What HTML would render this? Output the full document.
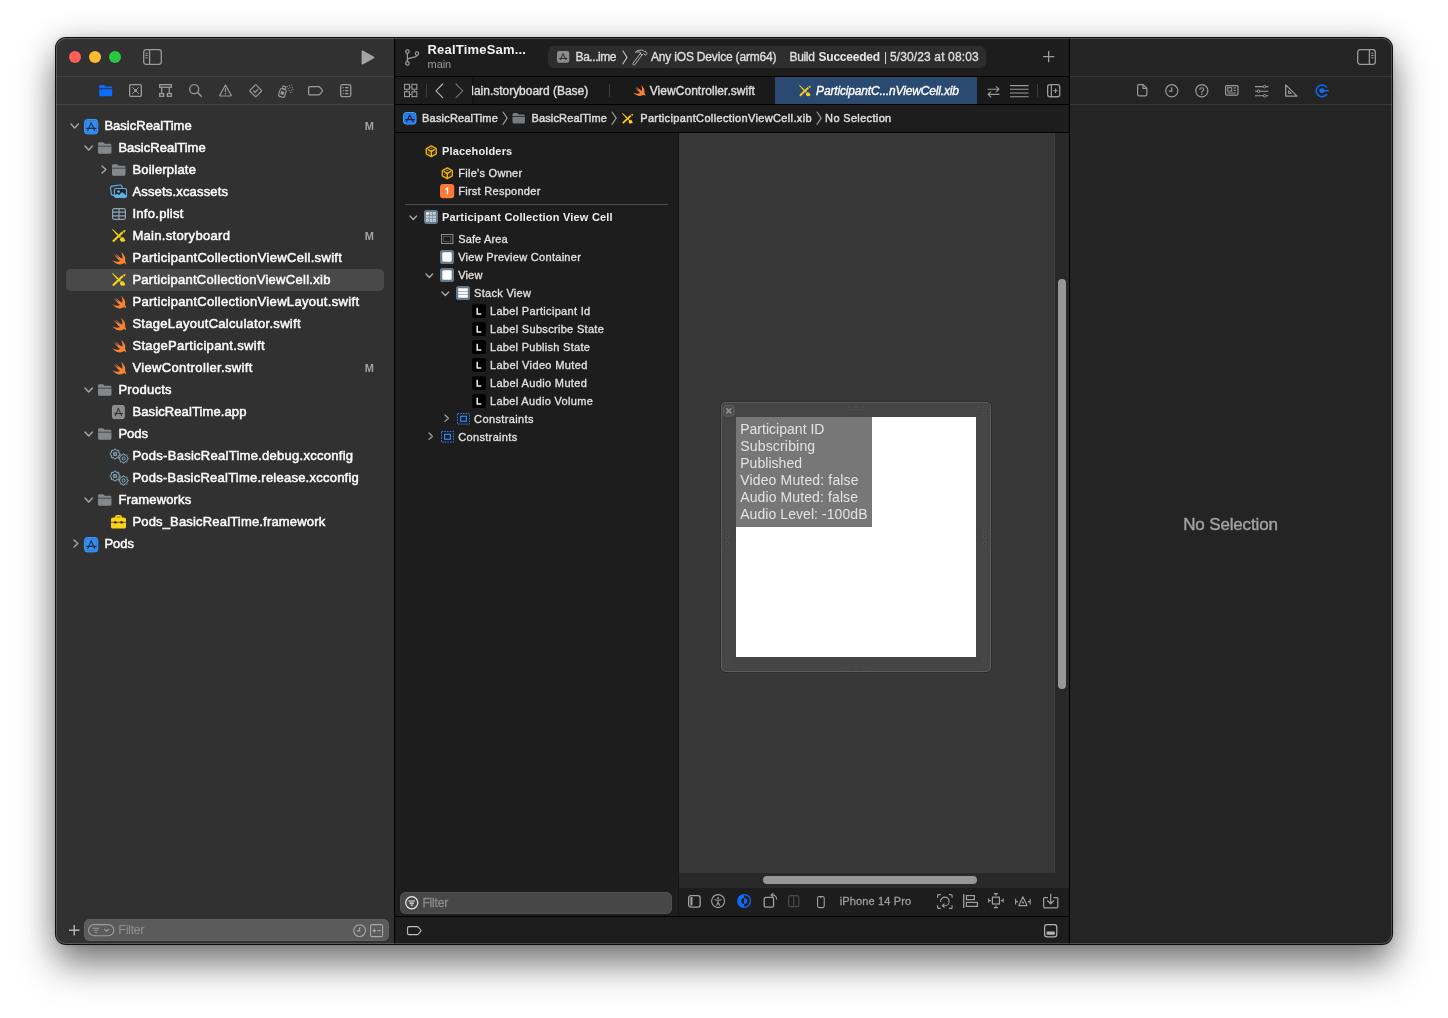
<!DOCTYPE html>
<html><head><meta charset="utf-8"><title>Xcode</title>
<style>
*{box-sizing:border-box;margin:0;padding:0}
html,body{width:1448px;height:1018px;background:#fff;overflow:hidden}
body{font-family:"Liberation Sans",sans-serif;font-size:13px;color:#e6e6e6;position:relative}
.win *{position:absolute}
.win{position:absolute;left:56px;top:38.4px;width:1336px;height:905.2px;border-radius:10px;background:#1e1e1e;overflow:hidden}
.in{will-change:transform;left:-56px;top:-38.4px;width:1448px;height:1018px}
.shadow{position:absolute;left:56px;top:38.4px;width:1336px;height:905.2px;border-radius:10px;
 box-shadow:0 0 0 1px rgba(0,0,0,.92),0 20px 37px rgba(0,0,0,.52),0 0 30px rgba(0,0,0,.14),0 0 5px rgba(0,0,0,.15)}
.t{white-space:nowrap}
svg{overflow:visible}
</style></head><body>
<div class="shadow"></div>
<div class="win"><div class="in">
<!-- nav -->
<div style="left:55px;top:37px;width:339.5px;height:908px;background:#313131;"></div>
<div style="left:68.8px;top:50.8px;width:12.4px;height:12.4px;background:#fe5f57;border-radius:50%;"></div>
<div style="left:88.8px;top:50.8px;width:12.4px;height:12.4px;background:#febc2e;border-radius:50%;"></div>
<div style="left:108.8px;top:50.8px;width:12.4px;height:12.4px;background:#28c840;border-radius:50%;"></div>
<svg style="left:143px;top:49px;" width="19" height="16" viewBox="0 0 19 16" fill="none"><rect x=".7" y=".7" width="17.6" height="14.6" rx="2.5" stroke="#9b9b9b" stroke-width="1.3"/><path d="M6.6 .7V15.3" stroke="#9b9b9b" stroke-width="1.3"/><path d="M2.4 4.2H4.8M2.4 6.5H4.8M2.4 8.8H4.8" stroke="#9b9b9b" stroke-width="1" /></svg>
<svg style="left:361px;top:49.6px;" width="14" height="15" viewBox="0 0 14 15" fill="none"><path d="M.6 1.2C.6 .5 1.2.2 1.8.5L13 6.7C13.6 7 13.6 7.9 13 8.2L1.8 14.5C1.2 14.8.6 14.5.6 13.8Z" fill="#a4a4a4"/></svg>
<div style="left:55px;top:76px;width:339.5px;height:1px;background:#434343;"></div>
<div style="left:55px;top:104px;width:339.5px;height:1px;background:#434343;"></div>
<svg style="left:99px;top:85px;" width="13.4" height="11.2" viewBox="0 0 14 12" fill="none"><path d="M0 1.6C0 .7.7 0 1.6 0H4.6C5.2 0 5.7.25 6.1.7L6.6 1.3C6.9 1.6 7.2 1.7 7.6 1.7H12.4C13.3 1.7 14 2.4 14 3.3V3.6H0Z" fill="#0a6dfd"/><path d="M0 4.5H14V10.4C14 11.3 13.3 12 12.4 12H1.6C.7 12 0 11.3 0 10.4Z" fill="#0a6dfd"/></svg>
<svg style="left:129px;top:84px;" width="13" height="13" viewBox="0 0 13 13" fill="none"><rect x=".65" y=".65" width="11.7" height="11.7" rx="1" stroke="#9b9b9b" stroke-width="1.3"/><path d="M3.2 3.2L9.8 9.8M9.8 3.2L3.2 9.8" stroke="#9b9b9b" stroke-width="1"/><circle cx="6.5" cy="6.5" r="1.5" fill="#9b9b9b"/></svg>
<svg style="left:159px;top:84px;" width="13" height="13" viewBox="0 0 13 13" fill="none"><rect x=".65" y=".65" width="11.7" height="2.6" stroke="#9b9b9b" stroke-width="1.3"/><rect x=".65" y="9.6" width="4" height="2.7" stroke="#9b9b9b" stroke-width="1.3"/><rect x="8.35" y="9.6" width="4" height="2.7" stroke="#9b9b9b" stroke-width="1.3"/><path d="M2.7 3.3V9.6M10.3 3.3V9.6" stroke="#9b9b9b" stroke-width="1.3"/></svg>
<svg style="left:189px;top:84px;" width="13" height="13" viewBox="0 0 13 13" fill="none"><circle cx="5.2" cy="5.2" r="4.5" stroke="#9b9b9b" stroke-width="1.3"/><path d="M8.5 8.5L12.3 12.3" stroke="#9b9b9b" stroke-width="1.5" stroke-linecap="round"/></svg>
<svg style="left:219px;top:83.5px;" width="13" height="12.6" viewBox="0 0 13 12.6" fill="none"><path d="M6.5 1L12.2 11.3C12.4 11.7 12.2 12 11.8 12H1.2C.8 12 .6 11.7.8 11.3Z" stroke="#9b9b9b" stroke-width="1.2" stroke-linejoin="round"/><path d="M6.5 4.8V7.7" stroke="#9b9b9b" stroke-width="1.2" stroke-linecap="round"/><circle cx="6.5" cy="9.8" r=".7" fill="#9b9b9b"/></svg>
<svg style="left:249px;top:84px;" width="13.4" height="13.4" viewBox="0 0 13.4 13.4" fill="none"><rect x="2.3" y="2.3" width="8.8" height="8.8" rx="1.2" transform="rotate(45 6.7 6.7)" stroke="#9b9b9b" stroke-width="1.2"/><path d="M4.6 6.9L6.1 8.4L8.9 5.3" stroke="#9b9b9b" stroke-width="1.2" stroke-linecap="round" stroke-linejoin="round"/></svg>
<svg style="left:278px;top:83.5px;" width="16" height="14" viewBox="0 0 16 14" fill="none"><g transform="rotate(18 5 8)"><rect x="1.6" y="5" width="6.2" height="8.2" rx="1.6" stroke="#9b9b9b" stroke-width="1.1"/><rect x="3.2" y="2.2" width="3" height="2.8" stroke="#9b9b9b" stroke-width="1"/><rect x="3.1" y="7.6" width="3.2" height="3.2" fill="#9b9b9b"/></g><circle cx="9.6" cy="2.6" r=".55" fill="#9b9b9b"/><circle cx="11.6" cy="1.6" r=".55" fill="#9b9b9b"/><circle cx="13.6" cy="0.7" r=".55" fill="#9b9b9b"/><circle cx="10.2" cy="4.6" r=".55" fill="#9b9b9b"/><circle cx="12.2" cy="3.8" r=".55" fill="#9b9b9b"/><circle cx="14.2" cy="3.1" r=".55" fill="#9b9b9b"/><circle cx="11.2" cy="6.6" r=".55" fill="#9b9b9b"/><circle cx="13.2" cy="6" r=".55" fill="#9b9b9b"/><circle cx="15" cy="5.4" r=".55" fill="#9b9b9b"/><circle cx="12.4" cy="8.6" r=".55" fill="#9b9b9b"/><circle cx="14.2" cy="8" r=".55" fill="#9b9b9b"/></svg>
<svg style="left:308px;top:85.6px;" width="15.2" height="9.6" viewBox="0 0 15.2 9.6" fill="none"><path d="M1.9 .65H10.6C11.1 .65 11.5.85 11.8 1.2L14.3 4.2C14.6 4.55 14.6 5.05 14.3 5.4L11.8 8.4C11.5 8.75 11.1 8.95 10.6 8.95H1.9C1.2 8.95.65 8.4.65 7.7V1.9C.65 1.2 1.2.65 1.9.65Z" stroke="#9b9b9b" stroke-width="1.3"/></svg>
<svg style="left:340px;top:84px;" width="11.4" height="13.2" viewBox="0 0 11.4 13.2" fill="none"><rect x=".65" y=".65" width="10.1" height="11.9" rx="1.6" stroke="#9b9b9b" stroke-width="1.3"/><path d="M5 3.6H8.4M5 6.6H8.4M5 9.6H8.4" stroke="#9b9b9b" stroke-width="1.1"/><path d="M2.8 3.6H3.7M2.8 6.6H3.7M2.8 9.6H3.7" stroke="#9b9b9b" stroke-width="1.1"/></svg>
<div style="left:66px;top:269px;width:318px;height:22px;background:#494949;border-radius:5px;"></div>
<svg style="left:71px;top:124.2px;" width="7.4" height="4" viewBox="0 0 7.4 4" fill="none"><path d="M0 0L3.7 4L7.4 0" stroke="#a8a8a8" stroke-width="1.4" stroke-linecap="round" stroke-linejoin="round"/></svg>
<svg style="left:84px;top:118.7px;" width="14.3" height="15.4" viewBox="0 0 14.3 15.4" fill="none"><rect x=".5" y=".5" width="13.3" height="14.4" rx="2.9" fill="#348ef3" stroke="#4198fa"/><rect x="1.55" y="1.55" width="11.2" height="12.3" rx="1.9" fill="none" stroke="#1f6fd2" stroke-width=".55"/><path d="M7.15 3.619L10.6964 11.5808M7.15 3.619L4.7905 9.394M4.3615 10.01L3.8324 11.5808M2.86 9.394H11.869" stroke="#1b2c47" stroke-width="1.15" stroke-linecap="round"/></svg>
<div class="t" style="left:104.4px;top:118.0px;font-size:13px;color:#fbfbfb;line-height:16px;height:16px;-webkit-text-stroke:0.5px #fbfbfb;letter-spacing:0.027px;">BasicRealTime</div>
<div class="t" style="left:364.8px;top:118.0px;font-size:11px;color:#a2a2a2;line-height:16px;height:16px;font-weight:bold;letter-spacing:0.044px;">M</div>
<svg style="left:85px;top:146.2px;" width="7.4" height="4" viewBox="0 0 7.4 4" fill="none"><path d="M0 0L3.7 4L7.4 0" stroke="#a8a8a8" stroke-width="1.4" stroke-linecap="round" stroke-linejoin="round"/></svg>
<svg style="left:98px;top:142px;" width="13.5" height="12" viewBox="0 0 14 12" fill="none"><path d="M0 1.6C0 .7.7 0 1.6 0H4.6C5.2 0 5.7.25 6.1.7L6.6 1.3C6.9 1.6 7.2 1.7 7.6 1.7H12.4C13.3 1.7 14 2.4 14 3.3V3.6H0Z" fill="#85888a"/><path d="M0 4.5H14V10.4C14 11.3 13.3 12 12.4 12H1.6C.7 12 0 11.3 0 10.4Z" fill="#85888a"/></svg>
<div class="t" style="left:118.4px;top:140.0px;font-size:13px;color:#fbfbfb;line-height:16px;height:16px;-webkit-text-stroke:0.5px #fbfbfb;letter-spacing:0.027px;">BasicRealTime</div>
<svg style="left:101.55px;top:165.65px;" width="3.9" height="7.1" viewBox="0 0 3.9 7.1" fill="none"><path d="M0 0L3.9 3.55L0 7.1" stroke="#a8a8a8" stroke-width="1.4" stroke-linecap="round" stroke-linejoin="round"/></svg>
<svg style="left:112px;top:164px;" width="13.5" height="12" viewBox="0 0 14 12" fill="none"><path d="M0 1.6C0 .7.7 0 1.6 0H4.6C5.2 0 5.7.25 6.1.7L6.6 1.3C6.9 1.6 7.2 1.7 7.6 1.7H12.4C13.3 1.7 14 2.4 14 3.3V3.6H0Z" fill="#85888a"/><path d="M0 4.5H14V10.4C14 11.3 13.3 12 12.4 12H1.6C.7 12 0 11.3 0 10.4Z" fill="#85888a"/></svg>
<div class="t" style="left:132.4px;top:162.0px;font-size:13px;color:#fbfbfb;line-height:16px;height:16px;-webkit-text-stroke:0.5px #fbfbfb;letter-spacing:0.204px;">Boilerplate</div>
<svg style="left:109.9px;top:184px;" width="17.1" height="14.1" viewBox="0 0 17.1 14.1" fill="none"><rect x=".9" y="1.5" width="11.6" height="9.4" rx="1.8" transform="rotate(-8 6.7 6.2)" stroke="#5db4e4" stroke-width="1.15"/><rect x="4.5" y="4.5" width="12" height="9" rx="1.8" fill="#262221" stroke="#5db4e4" stroke-width="1.2"/><path d="M4.6 11.6L6.2 10.3C6.8 9.9 7.6 9.9 8.2 10.4L9 11L11 9C11.7 8.4 12.7 8.4 13.4 9L16.4 11.8V12.4C16.4 13.1 15.8 13.6 15.2 13.6H5.8C5.1 13.6 4.6 13.1 4.6 12.4Z" fill="#5db4e4"/><circle cx="8.5" cy="7.6" r="1.4" fill="#5db4e4"/></svg>
<div class="t" style="left:132.4px;top:184.0px;font-size:13px;color:#fbfbfb;line-height:16px;height:16px;-webkit-text-stroke:0.5px #fbfbfb;letter-spacing:0.173px;">Assets.xcassets</div>
<svg style="left:112px;top:208px;" width="14" height="12" viewBox="0 0 14 12" fill="none"><rect x=".6" y=".6" width="12.8" height="10.8" rx="1.8" stroke="#8da3b3" stroke-width="1.2"/><path d="M.6 4.2H13.4M.6 7.8H13.4M7 .6V11.4" stroke="#8da3b3" stroke-width="1.2"/></svg>
<div class="t" style="left:132.4px;top:206.0px;font-size:13px;color:#fbfbfb;line-height:16px;height:16px;-webkit-text-stroke:0.5px #fbfbfb;letter-spacing:0.288px;">Info.plist</div>
<svg style="left:111.9px;top:229.1px;" width="13.4" height="13.4" viewBox="0 0 13.4 13.4" fill="none"><path d="M.1 .55L.7 .1L6.6 5.4L5.4 6.7Z" fill="#fcd116"/><path d="M6.5 6.5L8.5 8.3" stroke="#fcd116" stroke-width="1.8" opacity=".85"/><path d="M8.2 9.6C9 7.8 11.4 7.9 12.2 9.6C12.6 10.5 12.9 11 13.4 11.4C12.6 12.9 9.6 13.6 8.4 11.8C7.9 11 7.9 10.2 8.2 9.6Z" fill="#fcd116"/><path d="M.9 12.4L10.8 3.1" stroke="#fcd116" stroke-width="2.1"/><path d="M11 1.9L13.3 1.3L12.6 3.5Z" fill="#fcd116" stroke="#fcd116" stroke-width=".5" stroke-linejoin="round"/></svg>
<div class="t" style="left:132.4px;top:228.0px;font-size:13px;color:#fbfbfb;line-height:16px;height:16px;-webkit-text-stroke:0.5px #fbfbfb;letter-spacing:0.304px;">Main.storyboard</div>
<div class="t" style="left:364.8px;top:228.0px;font-size:11px;color:#a2a2a2;line-height:16px;height:16px;font-weight:bold;letter-spacing:0.044px;">M</div>
<svg style="left:111.8px;top:251.5px;" width="14.5" height="12.8" viewBox="2.3 3.3 18.4 16.6" fill="none"><defs><linearGradient id="sg" x1="0" y1="0" x2="0" y2="1"><stop offset="0" stop-color="#ff9a3c"/><stop offset="1" stop-color="#f36a2b"/></linearGradient></defs><path d="M13.543 3.41c4.114 2.47 6.545 7.162 5.549 11.131-.024.093-.05.181-.076.272l.002.001c2.062 2.538 1.5 5.258 1.236 4.745-1.072-2.086-3.066-1.568-4.088-1.043a6.803 6.803 0 0 1-.281.158l-.02.012-.002.002c-2.115 1.123-4.957 1.205-7.812-.022a12.568 12.568 0 0 1-5.64-4.838c.649.48 1.35.902 2.097 1.252 3.019 1.414 6.051 1.311 8.197-.002C9.651 12.73 7.101 9.67 5.146 7.191a10.628 10.628 0 0 1-1.005-1.384c2.34 2.142 6.038 4.83 7.365 5.576C8.69 8.408 6.208 4.743 6.324 4.86c4.436 4.47 8.528 6.996 8.528 6.996.154.085.27.154.36.213.085-.215.16-.437.224-.668.708-2.588-.09-5.548-1.893-7.992z" fill="#f98232"/></svg>
<div class="t" style="left:132.4px;top:250.0px;font-size:13px;color:#fbfbfb;line-height:16px;height:16px;-webkit-text-stroke:0.5px #fbfbfb;letter-spacing:0.325px;">ParticipantCollectionViewCell.swift</div>
<svg style="left:111.9px;top:273.1px;" width="13.4" height="13.4" viewBox="0 0 13.4 13.4" fill="none"><path d="M.1 .55L.7 .1L6.6 5.4L5.4 6.7Z" fill="#fcd116"/><path d="M6.5 6.5L8.5 8.3" stroke="#fcd116" stroke-width="1.8" opacity=".85"/><path d="M8.2 9.6C9 7.8 11.4 7.9 12.2 9.6C12.6 10.5 12.9 11 13.4 11.4C12.6 12.9 9.6 13.6 8.4 11.8C7.9 11 7.9 10.2 8.2 9.6Z" fill="#fcd116"/><path d="M.9 12.4L10.8 3.1" stroke="#fcd116" stroke-width="2.1"/><path d="M11 1.9L13.3 1.3L12.6 3.5Z" fill="#fcd116" stroke="#fcd116" stroke-width=".5" stroke-linejoin="round"/></svg>
<div class="t" style="left:132.4px;top:272.0px;font-size:13px;color:#fbfbfb;line-height:16px;height:16px;-webkit-text-stroke:0.5px #fbfbfb;letter-spacing:0.278px;">ParticipantCollectionViewCell.xib</div>
<svg style="left:111.8px;top:295.5px;" width="14.5" height="12.8" viewBox="2.3 3.3 18.4 16.6" fill="none"><defs><linearGradient id="sg" x1="0" y1="0" x2="0" y2="1"><stop offset="0" stop-color="#ff9a3c"/><stop offset="1" stop-color="#f36a2b"/></linearGradient></defs><path d="M13.543 3.41c4.114 2.47 6.545 7.162 5.549 11.131-.024.093-.05.181-.076.272l.002.001c2.062 2.538 1.5 5.258 1.236 4.745-1.072-2.086-3.066-1.568-4.088-1.043a6.803 6.803 0 0 1-.281.158l-.02.012-.002.002c-2.115 1.123-4.957 1.205-7.812-.022a12.568 12.568 0 0 1-5.64-4.838c.649.48 1.35.902 2.097 1.252 3.019 1.414 6.051 1.311 8.197-.002C9.651 12.73 7.101 9.67 5.146 7.191a10.628 10.628 0 0 1-1.005-1.384c2.34 2.142 6.038 4.83 7.365 5.576C8.69 8.408 6.208 4.743 6.324 4.86c4.436 4.47 8.528 6.996 8.528 6.996.154.085.27.154.36.213.085-.215.16-.437.224-.668.708-2.588-.09-5.548-1.893-7.992z" fill="#f98232"/></svg>
<div class="t" style="left:132.4px;top:294.0px;font-size:13px;color:#fbfbfb;line-height:16px;height:16px;-webkit-text-stroke:0.5px #fbfbfb;letter-spacing:0.320px;">ParticipantCollectionViewLayout.swift</div>
<svg style="left:111.8px;top:317.5px;" width="14.5" height="12.8" viewBox="2.3 3.3 18.4 16.6" fill="none"><defs><linearGradient id="sg" x1="0" y1="0" x2="0" y2="1"><stop offset="0" stop-color="#ff9a3c"/><stop offset="1" stop-color="#f36a2b"/></linearGradient></defs><path d="M13.543 3.41c4.114 2.47 6.545 7.162 5.549 11.131-.024.093-.05.181-.076.272l.002.001c2.062 2.538 1.5 5.258 1.236 4.745-1.072-2.086-3.066-1.568-4.088-1.043a6.803 6.803 0 0 1-.281.158l-.02.012-.002.002c-2.115 1.123-4.957 1.205-7.812-.022a12.568 12.568 0 0 1-5.64-4.838c.649.48 1.35.902 2.097 1.252 3.019 1.414 6.051 1.311 8.197-.002C9.651 12.73 7.101 9.67 5.146 7.191a10.628 10.628 0 0 1-1.005-1.384c2.34 2.142 6.038 4.83 7.365 5.576C8.69 8.408 6.208 4.743 6.324 4.86c4.436 4.47 8.528 6.996 8.528 6.996.154.085.27.154.36.213.085-.215.16-.437.224-.668.708-2.588-.09-5.548-1.893-7.992z" fill="#f98232"/></svg>
<div class="t" style="left:132.4px;top:316.0px;font-size:13px;color:#fbfbfb;line-height:16px;height:16px;-webkit-text-stroke:0.5px #fbfbfb;letter-spacing:0.297px;">StageLayoutCalculator.swift</div>
<svg style="left:111.8px;top:339.5px;" width="14.5" height="12.8" viewBox="2.3 3.3 18.4 16.6" fill="none"><defs><linearGradient id="sg" x1="0" y1="0" x2="0" y2="1"><stop offset="0" stop-color="#ff9a3c"/><stop offset="1" stop-color="#f36a2b"/></linearGradient></defs><path d="M13.543 3.41c4.114 2.47 6.545 7.162 5.549 11.131-.024.093-.05.181-.076.272l.002.001c2.062 2.538 1.5 5.258 1.236 4.745-1.072-2.086-3.066-1.568-4.088-1.043a6.803 6.803 0 0 1-.281.158l-.02.012-.002.002c-2.115 1.123-4.957 1.205-7.812-.022a12.568 12.568 0 0 1-5.64-4.838c.649.48 1.35.902 2.097 1.252 3.019 1.414 6.051 1.311 8.197-.002C9.651 12.73 7.101 9.67 5.146 7.191a10.628 10.628 0 0 1-1.005-1.384c2.34 2.142 6.038 4.83 7.365 5.576C8.69 8.408 6.208 4.743 6.324 4.86c4.436 4.47 8.528 6.996 8.528 6.996.154.085.27.154.36.213.085-.215.16-.437.224-.668.708-2.588-.09-5.548-1.893-7.992z" fill="#f98232"/></svg>
<div class="t" style="left:132.4px;top:338.0px;font-size:13px;color:#fbfbfb;line-height:16px;height:16px;-webkit-text-stroke:0.5px #fbfbfb;letter-spacing:0.344px;">StageParticipant.swift</div>
<svg style="left:111.8px;top:361.5px;" width="14.5" height="12.8" viewBox="2.3 3.3 18.4 16.6" fill="none"><defs><linearGradient id="sg" x1="0" y1="0" x2="0" y2="1"><stop offset="0" stop-color="#ff9a3c"/><stop offset="1" stop-color="#f36a2b"/></linearGradient></defs><path d="M13.543 3.41c4.114 2.47 6.545 7.162 5.549 11.131-.024.093-.05.181-.076.272l.002.001c2.062 2.538 1.5 5.258 1.236 4.745-1.072-2.086-3.066-1.568-4.088-1.043a6.803 6.803 0 0 1-.281.158l-.02.012-.002.002c-2.115 1.123-4.957 1.205-7.812-.022a12.568 12.568 0 0 1-5.64-4.838c.649.48 1.35.902 2.097 1.252 3.019 1.414 6.051 1.311 8.197-.002C9.651 12.73 7.101 9.67 5.146 7.191a10.628 10.628 0 0 1-1.005-1.384c2.34 2.142 6.038 4.83 7.365 5.576C8.69 8.408 6.208 4.743 6.324 4.86c4.436 4.47 8.528 6.996 8.528 6.996.154.085.27.154.36.213.085-.215.16-.437.224-.668.708-2.588-.09-5.548-1.893-7.992z" fill="#f98232"/></svg>
<div class="t" style="left:132.4px;top:360.0px;font-size:13px;color:#fbfbfb;line-height:16px;height:16px;-webkit-text-stroke:0.5px #fbfbfb;letter-spacing:0.354px;">ViewController.swift</div>
<div class="t" style="left:364.8px;top:360.0px;font-size:11px;color:#a2a2a2;line-height:16px;height:16px;font-weight:bold;letter-spacing:0.044px;">M</div>
<svg style="left:85px;top:388.2px;" width="7.4" height="4" viewBox="0 0 7.4 4" fill="none"><path d="M0 0L3.7 4L7.4 0" stroke="#a8a8a8" stroke-width="1.4" stroke-linecap="round" stroke-linejoin="round"/></svg>
<svg style="left:98px;top:384px;" width="13.5" height="12" viewBox="0 0 14 12" fill="none"><path d="M0 1.6C0 .7.7 0 1.6 0H4.6C5.2 0 5.7.25 6.1.7L6.6 1.3C6.9 1.6 7.2 1.7 7.6 1.7H12.4C13.3 1.7 14 2.4 14 3.3V3.6H0Z" fill="#85888a"/><path d="M0 4.5H14V10.4C14 11.3 13.3 12 12.4 12H1.6C.7 12 0 11.3 0 10.4Z" fill="#85888a"/></svg>
<div class="t" style="left:118.4px;top:382.0px;font-size:13px;color:#fbfbfb;line-height:16px;height:16px;-webkit-text-stroke:0.5px #fbfbfb;letter-spacing:0.273px;">Products</div>
<svg style="left:112px;top:405px;" width="12.7" height="14.1" viewBox="0 0 12.7 14.1" fill="none"><rect width="12.7" height="14.1" rx="2.8" fill="#8c8c8c"/><rect x=".4" y=".4" width="11.9" height="13.3" rx="2.4" stroke="#999" stroke-width=".6"/><path d="M6.35 3.3135L9.4996 10.6032M6.35 3.3135L4.2545 8.601M3.8735 9.165L3.4036 10.6032M2.54 8.601H10.541" stroke="#262626" stroke-width="0.95" stroke-linecap="round"/></svg>
<div class="t" style="left:132.4px;top:404.0px;font-size:13px;color:#fbfbfb;line-height:16px;height:16px;-webkit-text-stroke:0.5px #fbfbfb;letter-spacing:0.114px;">BasicRealTime.app</div>
<svg style="left:85px;top:432.2px;" width="7.4" height="4" viewBox="0 0 7.4 4" fill="none"><path d="M0 0L3.7 4L7.4 0" stroke="#a8a8a8" stroke-width="1.4" stroke-linecap="round" stroke-linejoin="round"/></svg>
<svg style="left:98px;top:428px;" width="13.5" height="12" viewBox="0 0 14 12" fill="none"><path d="M0 1.6C0 .7.7 0 1.6 0H4.6C5.2 0 5.7.25 6.1.7L6.6 1.3C6.9 1.6 7.2 1.7 7.6 1.7H12.4C13.3 1.7 14 2.4 14 3.3V3.6H0Z" fill="#85888a"/><path d="M0 4.5H14V10.4C14 11.3 13.3 12 12.4 12H1.6C.7 12 0 11.3 0 10.4Z" fill="#85888a"/></svg>
<div class="t" style="left:118.4px;top:426.0px;font-size:13px;color:#fbfbfb;line-height:16px;height:16px;-webkit-text-stroke:0.5px #fbfbfb;letter-spacing:-0.035px;">Pods</div>
<svg style="left:109.8px;top:449px;" width="18.2" height="14.2" viewBox="0 0 18.2 14.2" fill="none"><path d="M10.06 4.45L10.06 5.65L8.95 6.13L8.59 7.01L9.03 8.14L8.19 8.98L7.06 8.54L6.18 8.90L5.70 10.01L4.50 10.01L4.02 8.90L3.14 8.54L2.01 8.98L1.17 8.14L1.61 7.01L1.25 6.13L0.14 5.65L0.14 4.45L1.25 3.97L1.61 3.09L1.17 1.96L2.01 1.12L3.14 1.56L4.02 1.20L4.50 0.09L5.70 0.09L6.18 1.20L7.06 1.56L8.19 1.12L9.03 1.96L8.59 3.09L8.95 3.97Z" stroke="#8fb0c6" stroke-width="1" stroke-linejoin="round"/><circle cx="5.1" cy="5.05" r="1.65" stroke="#8fb0c6" stroke-width="1"/><path d="M2.6 2.55L7.6 7.55M7.6 2.55L2.6 7.55" stroke="#8fb0c6" stroke-width=".6" opacity=".6"/><path d="M18.17 8.95L18.17 10.05L17.14 10.49L16.81 11.31L17.22 12.34L16.44 13.12L15.41 12.71L14.59 13.04L14.15 14.07L13.05 14.07L12.61 13.04L11.79 12.71L10.76 13.12L9.98 12.34L10.39 11.31L10.06 10.49L9.03 10.05L9.03 8.95L10.06 8.51L10.39 7.69L9.98 6.66L10.76 5.88L11.79 6.29L12.61 5.96L13.05 4.93L14.15 4.93L14.59 5.96L15.41 6.29L16.44 5.88L17.22 6.66L16.81 7.69L17.14 8.51Z" stroke="#8fb0c6" stroke-width="1" stroke-linejoin="round"/><circle cx="13.6" cy="9.5" r="1.518" stroke="#8fb0c6" stroke-width="1"/></svg>
<div class="t" style="left:132.4px;top:448.0px;font-size:13px;color:#fbfbfb;line-height:16px;height:16px;-webkit-text-stroke:0.5px #fbfbfb;letter-spacing:0.272px;">Pods-BasicRealTime.debug.xcconfig</div>
<svg style="left:109.8px;top:471px;" width="18.2" height="14.2" viewBox="0 0 18.2 14.2" fill="none"><path d="M10.06 4.45L10.06 5.65L8.95 6.13L8.59 7.01L9.03 8.14L8.19 8.98L7.06 8.54L6.18 8.90L5.70 10.01L4.50 10.01L4.02 8.90L3.14 8.54L2.01 8.98L1.17 8.14L1.61 7.01L1.25 6.13L0.14 5.65L0.14 4.45L1.25 3.97L1.61 3.09L1.17 1.96L2.01 1.12L3.14 1.56L4.02 1.20L4.50 0.09L5.70 0.09L6.18 1.20L7.06 1.56L8.19 1.12L9.03 1.96L8.59 3.09L8.95 3.97Z" stroke="#8fb0c6" stroke-width="1" stroke-linejoin="round"/><circle cx="5.1" cy="5.05" r="1.65" stroke="#8fb0c6" stroke-width="1"/><path d="M2.6 2.55L7.6 7.55M7.6 2.55L2.6 7.55" stroke="#8fb0c6" stroke-width=".6" opacity=".6"/><path d="M18.17 8.95L18.17 10.05L17.14 10.49L16.81 11.31L17.22 12.34L16.44 13.12L15.41 12.71L14.59 13.04L14.15 14.07L13.05 14.07L12.61 13.04L11.79 12.71L10.76 13.12L9.98 12.34L10.39 11.31L10.06 10.49L9.03 10.05L9.03 8.95L10.06 8.51L10.39 7.69L9.98 6.66L10.76 5.88L11.79 6.29L12.61 5.96L13.05 4.93L14.15 4.93L14.59 5.96L15.41 6.29L16.44 5.88L17.22 6.66L16.81 7.69L17.14 8.51Z" stroke="#8fb0c6" stroke-width="1" stroke-linejoin="round"/><circle cx="13.6" cy="9.5" r="1.518" stroke="#8fb0c6" stroke-width="1"/></svg>
<div class="t" style="left:132.4px;top:470.0px;font-size:13px;color:#fbfbfb;line-height:16px;height:16px;-webkit-text-stroke:0.5px #fbfbfb;letter-spacing:0.234px;">Pods-BasicRealTime.release.xcconfig</div>
<svg style="left:85px;top:498.2px;" width="7.4" height="4" viewBox="0 0 7.4 4" fill="none"><path d="M0 0L3.7 4L7.4 0" stroke="#a8a8a8" stroke-width="1.4" stroke-linecap="round" stroke-linejoin="round"/></svg>
<svg style="left:98px;top:494px;" width="13.5" height="12" viewBox="0 0 14 12" fill="none"><path d="M0 1.6C0 .7.7 0 1.6 0H4.6C5.2 0 5.7.25 6.1.7L6.6 1.3C6.9 1.6 7.2 1.7 7.6 1.7H12.4C13.3 1.7 14 2.4 14 3.3V3.6H0Z" fill="#85888a"/><path d="M0 4.5H14V10.4C14 11.3 13.3 12 12.4 12H1.6C.7 12 0 11.3 0 10.4Z" fill="#85888a"/></svg>
<div class="t" style="left:118.4px;top:492.0px;font-size:13px;color:#fbfbfb;line-height:16px;height:16px;-webkit-text-stroke:0.5px #fbfbfb;letter-spacing:0.148px;">Frameworks</div>
<svg style="left:110.8px;top:514.75px;" width="15" height="13.6" viewBox="0 0 15 13.6" fill="none"><path d="M4.2 3V1.8C4.2 .8 5 0 6 0H9C10 0 10.8 .8 10.8 1.8V3Z" fill="#fdd317"/><rect x="5.6" y="1.4" width="3.8" height="1.5" rx=".4" fill="#8c7a1c"/><path d="M0 7V4.6C0 3.5 .9 2.6 2 2.6H13C14.1 2.6 15 3.5 15 4.6V7Z" fill="#fdd317"/><rect x="0" y="6.8" width="15" height="1.4" fill="#8a7618"/><path d="M0 8H15V11.8C15 12.8 14.2 13.6 13.2 13.6H1.8C.8 13.6 0 12.8 0 11.8Z" fill="#fdd317"/><ellipse cx="4.4" cy="7.4" rx="1.5" ry="1.15" fill="#20212c"/><ellipse cx="10.6" cy="7.4" rx="1.5" ry="1.15" fill="#20212c"/></svg>
<div class="t" style="left:132.4px;top:514.0px;font-size:13px;color:#fbfbfb;line-height:16px;height:16px;-webkit-text-stroke:0.5px #fbfbfb;letter-spacing:0.174px;">Pods_BasicRealTime.framework</div>
<svg style="left:73.55px;top:539.65px;" width="3.9" height="7.1" viewBox="0 0 3.9 7.1" fill="none"><path d="M0 0L3.9 3.55L0 7.1" stroke="#a8a8a8" stroke-width="1.4" stroke-linecap="round" stroke-linejoin="round"/></svg>
<svg style="left:84px;top:536.7px;" width="14.3" height="15.4" viewBox="0 0 14.3 15.4" fill="none"><rect x=".5" y=".5" width="13.3" height="14.4" rx="2.9" fill="#348ef3" stroke="#4198fa"/><rect x="1.55" y="1.55" width="11.2" height="12.3" rx="1.9" fill="none" stroke="#1f6fd2" stroke-width=".55"/><path d="M7.15 3.619L10.6964 11.5808M7.15 3.619L4.7905 9.394M4.3615 10.01L3.8324 11.5808M2.86 9.394H11.869" stroke="#1b2c47" stroke-width="1.15" stroke-linecap="round"/></svg>
<div class="t" style="left:104.4px;top:536.0px;font-size:13px;color:#fbfbfb;line-height:16px;height:16px;-webkit-text-stroke:0.5px #fbfbfb;letter-spacing:-0.035px;">Pods</div>
<svg style="left:68.5px;top:925px;" width="10.5" height="10.5" viewBox="0 0 10.5 10.5" fill="none"><path d="M5.25 0V10.5M0 5.25H10.5" stroke="#b4b4b4" stroke-width="1.4"/></svg>
<div style="left:84px;top:919.3px;width:305px;height:21.6px;background:#5b5b5b;border-radius:6px;box-shadow:inset 0 0 0 .5px #6a6a6a;"></div>
<svg style="left:88px;top:924.3px;" width="26.4" height="12.4" viewBox="0 0 26.4 12.4" fill="none"><rect x=".6" y=".6" width="25.2" height="11.2" rx="5.6" stroke="#9c9c9c" stroke-width="1.1"/><path d="M4.6 4.2H11.4M5.8 6.3H10.2M7 8.4H9" stroke="#9c9c9c" stroke-width="1"/><path d="M16.6 5.3L18.6 7.2L20.6 5.3" stroke="#9c9c9c" stroke-width="1.2" stroke-linecap="round" stroke-linejoin="round"/></svg>
<div class="t" style="left:118.2px;top:922.4px;font-size:13px;color:#8f8f8f;line-height:16px;height:16px;letter-spacing:-0.482px;">Filter</div>
<svg style="left:352.8px;top:923.6px;" width="13.2" height="13.2" viewBox="0 0 13.2 13.2" fill="none"><circle cx="6.6" cy="6.6" r="5.9" stroke="#a8a8a8" stroke-width="1.1"/><path d="M6.6 3.2V6.9H3.8" stroke="#a8a8a8" stroke-width="1.1"/></svg>
<svg style="left:369.6px;top:923.6px;" width="13.2" height="13.2" viewBox="0 0 13.2 13.2" fill="none"><rect x=".6" y=".6" width="12" height="12" rx="1.4" stroke="#a8a8a8" stroke-width="1.1"/><path d="M2.6 6.6H6.2M4.4 4.8V8.4M7.6 6.6H10.6" stroke="#a8a8a8" stroke-width="1.1"/></svg>
<!-- editor -->
<div style="left:394px;top:37px;width:1.2px;height:908px;background:#000;"></div>
<div style="left:395.2px;top:37px;width:674px;height:39px;background:#1d1d1d;"></div>
<div style="left:395.2px;top:76px;width:674px;height:1px;background:#000;"></div>
<svg style="left:404.5px;top:49px;" width="14.5" height="17" viewBox="0 0 14.5 17" fill="none"><circle cx="2.4" cy="2.6" r="1.7" stroke="#9b9b9b" stroke-width="1.2"/><circle cx="12" cy="4.6" r="1.7" stroke="#9b9b9b" stroke-width="1.2"/><circle cx="2.4" cy="14.4" r="1.7" stroke="#9b9b9b" stroke-width="1.2"/><path d="M2.4 4.3V12.7M12 6.3C12 9.4 2.4 8 2.4 11" stroke="#9b9b9b" stroke-width="1.3"/></svg>
<div class="t" style="left:427.5px;top:42.0px;font-size:13px;color:#f2f2f2;line-height:16px;height:16px;font-weight:bold;letter-spacing:0.195px;">RealTimeSam...</div>
<div class="t" style="left:427.5px;top:56.2px;font-size:11px;color:#9a9a9a;line-height:16px;height:16px;letter-spacing:-0.036px;">main</div>
<div style="left:548px;top:46px;width:438px;height:22px;background:#2d2d2d;border-radius:6px;"></div>
<svg style="left:557px;top:51.2px;" width="12.3" height="11.8" viewBox="0 0 12.3 11.8" fill="none"><rect width="12.3" height="11.8" rx="2.2" fill="#8c8c8c"/><path d="M6.1 2.9L8.9 8.8M6.1 2.9L4 7.4M3.7 7.9L3.3 8.8M2.5 7.5H9.9" stroke="#2a2a2a" stroke-width=".95" stroke-linecap="round"/></svg>
<div class="t" style="left:575.6px;top:49.2px;font-size:12px;color:#dedede;line-height:16px;height:16px;-webkit-text-stroke:0.35px #dedede;letter-spacing:-0.450px;">Ba...ime</div>
<svg style="left:622.5px;top:50.7px;" width="4" height="12.8" viewBox="0 0 4 12.8" fill="none"><path d="M0 0L4 6.4L0 12.8" stroke="#c4c4c4" stroke-width="1.1" stroke-linecap="round" stroke-linejoin="round"/></svg>
<svg style="left:632px;top:49px;" width="15.1" height="16.2" viewBox="0 0 15.1 16.2" fill="none"><path d="M8.2 4.6L10 6L2.9 15.6C2.5 16.1 1.8 16.2 1.3 15.8C.8 15.4 .7 14.7 1.1 14.2Z" stroke="#b2b2b2" stroke-width="1" stroke-linejoin="round"/><path d="M3.4 3.2C5.2 1.2 8.4 .5 11.4 1.6L12.4 2.6L13.2 2.1L15 4.4L13.4 6.4L11.6 4.6L10 6L8.2 4.6L8.8 3.6C7 2.6 5 2.8 3.4 3.2Z" stroke="#b2b2b2" stroke-width="1" stroke-linejoin="round"/></svg>
<div class="t" style="left:651.0px;top:49.2px;font-size:12px;color:#dedede;line-height:16px;height:16px;-webkit-text-stroke:0.35px #dedede;letter-spacing:-0.185px;">Any iOS Device (arm64)</div>
<div class="t" style="left:789.6px;top:49.2px;font-size:12px;color:#dedede;line-height:16px;height:16px;-webkit-text-stroke:0.35px #dedede;letter-spacing:-0.358px;">Build</div>
<div class="t" style="left:818.6px;top:49.2px;font-size:12px;color:#e8e8e8;line-height:16px;height:16px;font-weight:bold;letter-spacing:-0.249px;">Succeeded</div>
<div class="t" style="left:884.0px;top:49.2px;font-size:12px;color:#dedede;line-height:16px;height:16px;">|</div>
<div class="t" style="left:889.9px;top:49.2px;font-size:12px;color:#dedede;line-height:16px;height:16px;-webkit-text-stroke:0.35px #dedede;letter-spacing:0.138px;">5/30/23 at 08:03</div>
<svg style="left:1043.4px;top:51.4px;" width="11.3" height="11.3" viewBox="0 0 11.3 11.3" fill="none"><path d="M5.65 0V11.3M0 5.65H11.3" stroke="#9b9b9b" stroke-width="1.3"/></svg>
<div style="left:395.2px;top:77px;width:674px;height:27px;background:#1d1d1d;"></div>
<div style="left:472.2px;top:77px;width:597px;height:27px;background:#1a1a1a;"></div>
<div style="left:472.2px;top:77px;width:3px;height:27px;background:linear-gradient(90deg,#111,#1a1a1a);"></div>
<div style="left:395.2px;top:104px;width:674px;height:1px;background:#000;"></div>
<svg style="left:403.9px;top:84px;" width="13.2" height="13.2" viewBox="0 0 13.2 13.2" fill="none"><rect x="0.55" y="0.35" width="4.9" height="4.9" stroke="#9b9b9b" stroke-width="1.1"/><rect x="7.95" y="0.35" width="4.9" height="4.9" stroke="#9b9b9b" stroke-width="1.1"/><rect x="0.55" y="7.75" width="4.9" height="4.9" stroke="#9b9b9b" stroke-width="1.1"/><rect x="7.95" y="7.75" width="4.9" height="4.9" stroke="#9b9b9b" stroke-width="1.1"/><path d="M6 3H7.4M3 6V7.4M10.4 6V7.4M6 10.4H7.4" stroke="#9b9b9b" stroke-width="1"/></svg>
<div style="left:426px;top:84px;width:1px;height:12.5px;background:#3c3c3c;"></div>
<svg style="left:435.65px;top:83.8px;" width="6.7" height="13.6" viewBox="0 0 6.7 13.6" fill="none"><path d="M6.7 0L0 6.8L6.7 13.6" stroke="#b4b4b4" stroke-width="1.2" stroke-linecap="round" stroke-linejoin="round"/></svg>
<svg style="left:455.65px;top:83.8px;" width="6.7" height="13.6" viewBox="0 0 6.7 13.6" fill="none"><path d="M0 0L6.7 6.8L0 13.6" stroke="#6e6e6e" stroke-width="1.2" stroke-linecap="round" stroke-linejoin="round"/></svg>
<div style="left:472.2px;top:77px;width:130px;height:27px;overflow:hidden"><div class="t" style="left:-8.2px;top:6.2px;font-size:12px;color:#dcdcdc;line-height:16px;height:16px;-webkit-text-stroke:0.4px #dcdcdc;letter-spacing:-0.023px;">Main.storyboard (Base)</div></div>
<div style="left:608.6px;top:84px;width:1px;height:13px;background:#3c3c3c;"></div>
<svg style="left:632.6px;top:85.2px;" width="12.6" height="11.2" viewBox="2.3 3.3 18.4 16.6" fill="none"><defs><linearGradient id="sg" x1="0" y1="0" x2="0" y2="1"><stop offset="0" stop-color="#ff9a3c"/><stop offset="1" stop-color="#f36a2b"/></linearGradient></defs><path d="M13.543 3.41c4.114 2.47 6.545 7.162 5.549 11.131-.024.093-.05.181-.076.272l.002.001c2.062 2.538 1.5 5.258 1.236 4.745-1.072-2.086-3.066-1.568-4.088-1.043a6.803 6.803 0 0 1-.281.158l-.02.012-.002.002c-2.115 1.123-4.957 1.205-7.812-.022a12.568 12.568 0 0 1-5.64-4.838c.649.48 1.35.902 2.097 1.252 3.019 1.414 6.051 1.311 8.197-.002C9.651 12.73 7.101 9.67 5.146 7.191a10.628 10.628 0 0 1-1.005-1.384c2.34 2.142 6.038 4.83 7.365 5.576C8.69 8.408 6.208 4.743 6.324 4.86c4.436 4.47 8.528 6.996 8.528 6.996.154.085.27.154.36.213.085-.215.16-.437.224-.668.708-2.588-.09-5.548-1.893-7.992z" fill="#f98232"/></svg>
<div class="t" style="left:649.8px;top:83.2px;font-size:12px;color:#dcdcdc;line-height:16px;height:16px;-webkit-text-stroke:0.4px #dcdcdc;letter-spacing:0.035px;">ViewController.swift</div>
<div style="left:775px;top:77px;width:202.4px;height:27px;background:#2b4a72;"></div>
<svg style="left:799.2px;top:85.3px;" width="11.6" height="11.6" viewBox="0 0 13.4 13.4" fill="none"><path d="M.1 .55L.7 .1L6.6 5.4L5.4 6.7Z" fill="#fcd116"/><path d="M6.5 6.5L8.5 8.3" stroke="#fcd116" stroke-width="1.8" opacity=".85"/><path d="M8.2 9.6C9 7.8 11.4 7.9 12.2 9.6C12.6 10.5 12.9 11 13.4 11.4C12.6 12.9 9.6 13.6 8.4 11.8C7.9 11 7.9 10.2 8.2 9.6Z" fill="#fcd116"/><path d="M.9 12.4L10.8 3.1" stroke="#fcd116" stroke-width="2.1"/><path d="M11 1.9L13.3 1.3L12.6 3.5Z" fill="#fcd116" stroke="#fcd116" stroke-width=".5" stroke-linejoin="round"/></svg>
<div class="t" style="left:816.1px;top:83.2px;font-size:12px;color:#ffffff;line-height:16px;height:16px;font-style:italic;-webkit-text-stroke:0.35px #ffffff;letter-spacing:-0.160px;">ParticipantC...nViewCell.xib</div>
<svg style="left:987px;top:85.6px;" width="13" height="11.6" viewBox="0 0 13 11.6" fill="none"><path d="M1 3.2H12M9.2 .6L12 3.2L9.2 5.8M12 8.4H1M3.8 5.8L1 8.4L3.8 11" stroke="#9b9b9b" stroke-width="1.1" stroke-linecap="round" stroke-linejoin="round"/></svg>
<svg style="left:1009.5px;top:85px;" width="18.6" height="12.4" viewBox="0 0 18.6 12.4" fill="none"><path d="M0 .6H18.6M0 4.3H18.6M0 8H18.6M0 11.7H18.6" stroke="#9b9b9b" stroke-width="1.1"/></svg>
<div style="left:1037px;top:84px;width:1px;height:13px;background:#3c3c3c;"></div>
<svg style="left:1047px;top:84.4px;" width="13.4" height="13.4" viewBox="0 0 13.4 13.4" fill="none"><rect x=".65" y=".65" width="12.1" height="12.1" rx="2.2" stroke="#9b9b9b" stroke-width="1.3"/><path d="M4.4 .65V12.75" stroke="#9b9b9b" stroke-width="1.2"/><path d="M6.4 6.7H10.8M8.6 4.5V8.9" stroke="#9b9b9b" stroke-width="1.1"/></svg>
<div style="left:395.2px;top:105px;width:674px;height:27px;background:#1d1d1d;"></div>
<div style="left:395.2px;top:132px;width:674px;height:1px;background:#000;"></div>
<svg style="left:403px;top:112.1px;" width="13.5" height="12.6" viewBox="0 0 13.5 12.6" fill="none"><rect x=".5" y=".5" width="12.5" height="11.6" rx="2.9" fill="#2a80ee" stroke="#4a9ffc"/><rect x="1.55" y="1.55" width="10.4" height="9.5" rx="1.9" fill="none" stroke="#1a62c4" stroke-width=".55"/><path d="M6.75 2.961L10.098 9.4752M6.75 2.961L4.5225 7.686M4.1175 8.19L3.618 9.4752M2.7 7.686H11.205" stroke="#16233c" stroke-width="1.15" stroke-linecap="round"/></svg>
<div class="t" style="left:422.1px;top:110.3px;font-size:11px;color:#dcdcdc;line-height:16px;height:16px;-webkit-text-stroke:0.45px #dcdcdc;letter-spacing:0.180px;">BasicRealTime</div>
<svg style="left:502.7px;top:112.4px;" width="4.2" height="12.4" viewBox="0 0 4.2 12.4" fill="none"><path d="M0 0L4.2 6.2L0 12.4" stroke="#9c9c9c" stroke-width="1.2" stroke-linecap="round" stroke-linejoin="round"/></svg>
<svg style="left:511.8px;top:112.8px;" width="13.4" height="10.6" viewBox="0 0 14 12" fill="none"><path d="M0 1.6C0 .7.7 0 1.6 0H4.6C5.2 0 5.7.25 6.1.7L6.6 1.3C6.9 1.6 7.2 1.7 7.6 1.7H12.4C13.3 1.7 14 2.4 14 3.3V3.6H0Z" fill="#777b7f"/><path d="M0 4.5H14V10.4C14 11.3 13.3 12 12.4 12H1.6C.7 12 0 11.3 0 10.4Z" fill="#777b7f"/></svg>
<div class="t" style="left:531.4px;top:110.3px;font-size:11px;color:#dcdcdc;line-height:16px;height:16px;-webkit-text-stroke:0.45px #dcdcdc;letter-spacing:0.157px;">BasicRealTime</div>
<svg style="left:611.8px;top:112.4px;" width="4.2" height="12.4" viewBox="0 0 4.2 12.4" fill="none"><path d="M0 0L4.2 6.2L0 12.4" stroke="#9c9c9c" stroke-width="1.2" stroke-linecap="round" stroke-linejoin="round"/></svg>
<svg style="left:622px;top:113px;" width="11" height="11" viewBox="0 0 13.4 13.4" fill="none"><path d="M.1 .55L.7 .1L6.6 5.4L5.4 6.7Z" fill="#fcd116"/><path d="M6.5 6.5L8.5 8.3" stroke="#fcd116" stroke-width="1.8" opacity=".85"/><path d="M8.2 9.6C9 7.8 11.4 7.9 12.2 9.6C12.6 10.5 12.9 11 13.4 11.4C12.6 12.9 9.6 13.6 8.4 11.8C7.9 11 7.9 10.2 8.2 9.6Z" fill="#fcd116"/><path d="M.9 12.4L10.8 3.1" stroke="#fcd116" stroke-width="2.1"/><path d="M11 1.9L13.3 1.3L12.6 3.5Z" fill="#fcd116" stroke="#fcd116" stroke-width=".5" stroke-linejoin="round"/></svg>
<div class="t" style="left:640.2px;top:110.3px;font-size:11px;color:#dcdcdc;line-height:16px;height:16px;-webkit-text-stroke:0.45px #dcdcdc;letter-spacing:0.357px;">ParticipantCollectionViewCell.xib</div>
<svg style="left:816.5px;top:112.4px;" width="4.2" height="12.4" viewBox="0 0 4.2 12.4" fill="none"><path d="M0 0L4.2 6.2L0 12.4" stroke="#9c9c9c" stroke-width="1.2" stroke-linecap="round" stroke-linejoin="round"/></svg>
<div class="t" style="left:825.1px;top:110.3px;font-size:11px;color:#dcdcdc;line-height:16px;height:16px;-webkit-text-stroke:0.45px #dcdcdc;letter-spacing:0.341px;">No Selection</div>
<!-- editor2 -->
<div style="left:395.2px;top:133px;width:283px;height:755px;background:#1d1d1d;"></div>
<div style="left:678px;top:133px;width:1px;height:783px;background:#141414;"></div>
<svg style="left:424.8px;top:144.6px;" width="12.6" height="12.6" viewBox="0 0 12.6 12.6" fill="none"><path d="M6.3 .9L11.3 3.7V8.9L6.3 11.7L1.3 8.9V3.7Z" stroke="#f0b400" stroke-width="1.35" stroke-linejoin="round"/><path d="M6.3 6.5V10.6M6.3 6.5L3.2 4.6M6.3 6.5L9.4 4.6" stroke="#f0b400" stroke-width="1.6" stroke-linecap="round"/><path d="M5.3 3.3H7.3" stroke="#f0b400" stroke-width=".9"/><path d="M3 7.4L4 8M9.6 7.4L8.6 8" stroke="#f0b400" stroke-width=".8"/></svg>
<div class="t" style="left:442.0px;top:143.0px;font-size:11px;color:#ececec;line-height:16px;height:16px;font-weight:bold;letter-spacing:0.156px;">Placeholders</div>
<svg style="left:440.7px;top:166.6px;" width="12.6" height="12.6" viewBox="0 0 12.6 12.6" fill="none"><path d="M6.3 .9L11.3 3.7V8.9L6.3 11.7L1.3 8.9V3.7Z" stroke="#f0b400" stroke-width="1.35" stroke-linejoin="round"/><path d="M6.3 6.5V10.6M6.3 6.5L3.2 4.6M6.3 6.5L9.4 4.6" stroke="#f0b400" stroke-width="1.6" stroke-linecap="round"/><path d="M5.3 3.3H7.3" stroke="#f0b400" stroke-width=".9"/><path d="M3 7.4L4 8M9.6 7.4L8.6 8" stroke="#f0b400" stroke-width=".8"/></svg>
<div class="t" style="left:458.2px;top:165.0px;font-size:11px;color:#e2e2e2;line-height:16px;height:16px;-webkit-text-stroke:0.3px #e2e2e2;letter-spacing:0.285px;">File's Owner</div>
<svg style="left:440px;top:184px;" width="14.2" height="14.2" viewBox="0 0 14.2 14.2" fill="none"><rect width="14.2" height="14.2" rx="3.2" fill="#fd7a36"/><path d="M5.6 5.4L7.5 4.1V10.4" stroke="#fff" stroke-width="1.3" fill="none"/></svg>
<div class="t" style="left:458.2px;top:183.0px;font-size:11px;color:#e2e2e2;line-height:16px;height:16px;-webkit-text-stroke:0.3px #e2e2e2;letter-spacing:0.275px;">First Responder</div>
<div style="left:405px;top:204px;width:263px;height:1px;background:#4e4e4e;"></div>
<svg style="left:410.1px;top:215.5px;" width="6.6" height="3.6" viewBox="0 0 6.6 3.6" fill="none"><path d="M0 0L3.3 3.6L6.6 0" stroke="#a6a6a6" stroke-width="1.4" stroke-linecap="round" stroke-linejoin="round"/></svg>
<svg style="left:424px;top:210px;" width="14" height="14" viewBox="0 0 14 14" fill="none"><rect width="14" height="14" rx="2.4" fill="#687c8b"/><rect x="2.2" y="2.2" width="2.6" height="2.6" fill="#fff"/><rect x="6" y="2.5" width="2" height="2" fill="#93a3af" stroke="#eef2f5" stroke-width=".6"/><rect x="9.5" y="2.5" width="2" height="2" fill="#93a3af" stroke="#eef2f5" stroke-width=".6"/><rect x="2.5" y="6" width="2" height="2" fill="#93a3af" stroke="#eef2f5" stroke-width=".6"/><rect x="6" y="6" width="2" height="2" fill="#93a3af" stroke="#eef2f5" stroke-width=".6"/><rect x="9.5" y="6" width="2" height="2" fill="#93a3af" stroke="#eef2f5" stroke-width=".6"/><rect x="2.5" y="9.5" width="2" height="2" fill="#93a3af" stroke="#eef2f5" stroke-width=".6"/><rect x="6" y="9.5" width="2" height="2" fill="#93a3af" stroke="#eef2f5" stroke-width=".6"/><rect x="9.5" y="9.5" width="2" height="2" fill="#93a3af" stroke="#eef2f5" stroke-width=".6"/></svg>
<div class="t" style="left:442.0px;top:209.0px;font-size:11px;color:#ececec;line-height:16px;height:16px;font-weight:bold;letter-spacing:0.208px;">Participant Collection View Cell</div>
<svg style="left:440.8px;top:233.8px;" width="12.4" height="10" viewBox="0 0 12.4 10" fill="none"><rect x=".5" y=".5" width="11.4" height="9" stroke="#8c8c8c" stroke-width="1"/><rect x="2.5" y="2.4" width="7.4" height="5.2" stroke="#555" stroke-width=".9"/></svg>
<div class="t" style="left:458.2px;top:231.0px;font-size:11px;color:#e2e2e2;line-height:16px;height:16px;-webkit-text-stroke:0.3px #e2e2e2;letter-spacing:0.138px;">Safe Area</div>
<svg style="left:440px;top:250px;" width="14" height="14" viewBox="0 0 14 14" fill="none"><rect width="14" height="14" rx="2.6" fill="#64798a"/><rect x="2.3" y="2.3" width="9.4" height="9.4" rx="1.2" fill="#fff"/></svg>
<div class="t" style="left:458.2px;top:249.0px;font-size:11px;color:#e2e2e2;line-height:16px;height:16px;-webkit-text-stroke:0.3px #e2e2e2;letter-spacing:0.290px;">View Preview Container</div>
<svg style="left:426.1px;top:273.5px;" width="6.6" height="3.6" viewBox="0 0 6.6 3.6" fill="none"><path d="M0 0L3.3 3.6L6.6 0" stroke="#a6a6a6" stroke-width="1.4" stroke-linecap="round" stroke-linejoin="round"/></svg>
<svg style="left:440px;top:268px;" width="14" height="14" viewBox="0 0 14 14" fill="none"><rect width="14" height="14" rx="2.6" fill="#64798a"/><rect x="2.3" y="2.3" width="9.4" height="9.4" rx="1.2" fill="#fff"/></svg>
<div class="t" style="left:458.2px;top:267.0px;font-size:11px;color:#e2e2e2;line-height:16px;height:16px;-webkit-text-stroke:0.3px #e2e2e2;letter-spacing:0.165px;">View</div>
<svg style="left:442px;top:291.5px;" width="6.6" height="3.6" viewBox="0 0 6.6 3.6" fill="none"><path d="M0 0L3.3 3.6L6.6 0" stroke="#a6a6a6" stroke-width="1.4" stroke-linecap="round" stroke-linejoin="round"/></svg>
<svg style="left:456px;top:286px;" width="14" height="14" viewBox="0 0 14 14" fill="none"><rect width="14" height="14" rx="2.6" fill="#64798a"/><rect x="2.2" y="2.3" width="9.6" height="2.8" fill="#fff"/><rect x="2.2" y="5.6" width="9.6" height="2.8" fill="#f4f6f8"/><rect x="2.2" y="8.9" width="9.6" height="2.8" fill="#fff"/></svg>
<div class="t" style="left:474.1px;top:285.0px;font-size:11px;color:#e2e2e2;line-height:16px;height:16px;-webkit-text-stroke:0.3px #e2e2e2;letter-spacing:0.287px;">Stack View</div>
<svg style="left:472px;top:304px;" width="14" height="14" viewBox="0 0 14 14" fill="none"><rect width="14" height="14" rx="2.6" fill="#000"/><path d="M5.2 3.8V10.1H9.3" stroke="#f0f0f0" stroke-width="1.5"/></svg>
<div class="t" style="left:490.0px;top:303.0px;font-size:11px;color:#e2e2e2;line-height:16px;height:16px;-webkit-text-stroke:0.3px #e2e2e2;letter-spacing:0.317px;">Label Participant Id</div>
<svg style="left:472px;top:322px;" width="14" height="14" viewBox="0 0 14 14" fill="none"><rect width="14" height="14" rx="2.6" fill="#000"/><path d="M5.2 3.8V10.1H9.3" stroke="#f0f0f0" stroke-width="1.5"/></svg>
<div class="t" style="left:490.0px;top:321.0px;font-size:11px;color:#e2e2e2;line-height:16px;height:16px;-webkit-text-stroke:0.3px #e2e2e2;letter-spacing:0.309px;">Label Subscribe State</div>
<svg style="left:472px;top:340px;" width="14" height="14" viewBox="0 0 14 14" fill="none"><rect width="14" height="14" rx="2.6" fill="#000"/><path d="M5.2 3.8V10.1H9.3" stroke="#f0f0f0" stroke-width="1.5"/></svg>
<div class="t" style="left:490.0px;top:339.0px;font-size:11px;color:#e2e2e2;line-height:16px;height:16px;-webkit-text-stroke:0.3px #e2e2e2;letter-spacing:0.286px;">Label Publish State</div>
<svg style="left:472px;top:358px;" width="14" height="14" viewBox="0 0 14 14" fill="none"><rect width="14" height="14" rx="2.6" fill="#000"/><path d="M5.2 3.8V10.1H9.3" stroke="#f0f0f0" stroke-width="1.5"/></svg>
<div class="t" style="left:490.0px;top:357.0px;font-size:11px;color:#e2e2e2;line-height:16px;height:16px;-webkit-text-stroke:0.3px #e2e2e2;letter-spacing:0.358px;">Label Video Muted</div>
<svg style="left:472px;top:376px;" width="14" height="14" viewBox="0 0 14 14" fill="none"><rect width="14" height="14" rx="2.6" fill="#000"/><path d="M5.2 3.8V10.1H9.3" stroke="#f0f0f0" stroke-width="1.5"/></svg>
<div class="t" style="left:490.0px;top:375.0px;font-size:11px;color:#e2e2e2;line-height:16px;height:16px;-webkit-text-stroke:0.3px #e2e2e2;letter-spacing:0.359px;">Label Audio Muted</div>
<svg style="left:472px;top:394px;" width="14" height="14" viewBox="0 0 14 14" fill="none"><rect width="14" height="14" rx="2.6" fill="#000"/><path d="M5.2 3.8V10.1H9.3" stroke="#f0f0f0" stroke-width="1.5"/></svg>
<div class="t" style="left:490.0px;top:393.0px;font-size:11px;color:#e2e2e2;line-height:16px;height:16px;-webkit-text-stroke:0.3px #e2e2e2;letter-spacing:0.327px;">Label Audio Volume</div>
<svg style="left:444.8px;top:415.4px;" width="3.4" height="6.4" viewBox="0 0 3.4 6.4" fill="none"><path d="M0 0L3.4 3.2L0 6.4" stroke="#a0a0a0" stroke-width="1.3" stroke-linecap="round" stroke-linejoin="round"/></svg>
<svg style="left:457px;top:413.2px;" width="13" height="11.6" viewBox="0 0 13 11.6" fill="none"><rect x=".5" y=".5" width="12" height="10.6" stroke="#2f7fe6" stroke-width="1" stroke-dasharray="1.6 1.1"/><rect x="3.6" y="3.3" width="5.8" height="5" stroke="#2f7fe6" stroke-width="1.3"/></svg>
<div class="t" style="left:474.1px;top:411.0px;font-size:11px;color:#e2e2e2;line-height:16px;height:16px;-webkit-text-stroke:0.3px #e2e2e2;letter-spacing:0.368px;">Constraints</div>
<svg style="left:428.9px;top:433.4px;" width="3.4" height="6.4" viewBox="0 0 3.4 6.4" fill="none"><path d="M0 0L3.4 3.2L0 6.4" stroke="#a0a0a0" stroke-width="1.3" stroke-linecap="round" stroke-linejoin="round"/></svg>
<svg style="left:441px;top:431.2px;" width="13" height="11.6" viewBox="0 0 13 11.6" fill="none"><rect x=".5" y=".5" width="12" height="10.6" stroke="#2f7fe6" stroke-width="1" stroke-dasharray="1.6 1.1"/><rect x="3.6" y="3.3" width="5.8" height="5" stroke="#2f7fe6" stroke-width="1.3"/></svg>
<div class="t" style="left:458.2px;top:429.0px;font-size:11px;color:#e2e2e2;line-height:16px;height:16px;-webkit-text-stroke:0.3px #e2e2e2;letter-spacing:0.340px;">Constraints</div>
<div style="left:400px;top:892px;width:272px;height:22px;background:#474747;border-radius:6px;box-shadow:inset 0 0 0 .5px #5a5a5a;"></div>
<svg style="left:404.5px;top:896.2px;" width="13.5" height="13.5" viewBox="0 0 13.5 13.5" fill="none"><circle cx="6.75" cy="6.75" r="6.05" stroke="#ececec" stroke-width="1.2"/><path d="M3.5 5H10M4.6 7.1H8.9M5.7 9.1H7.8" stroke="#ececec" stroke-width="1.05"/></svg>
<div class="t" style="left:422.4px;top:895.0px;font-size:12px;color:#8c8c8c;line-height:16px;height:16px;-webkit-text-stroke:0.3px #8c8c8c;letter-spacing:-0.179px;">Filter</div>
<div style="left:679px;top:133px;width:376px;height:740px;background:#383838;"></div>
<div style="left:1054.4px;top:133px;width:1px;height:740px;background:#404040;"></div>
<div style="left:1055px;top:133px;width:14.2px;height:755px;background:#292929;"></div>
<div style="left:679px;top:873px;width:376px;height:15px;background:#292929;"></div>
<div style="left:1058.3px;top:279px;width:7.8px;height:410px;background:#979797;border-radius:4px;"></div>
<div style="left:762.8px;top:876px;width:214px;height:7.8px;background:#979797;border-radius:4px;"></div>
<div style="left:721.2px;top:402.1px;width:269.8px;height:269.8px;background:#454545;border-radius:5px;box-shadow:inset 0 0 0 1px #5c5c5c,0 0 0 1px #2e2e2e;"></div>
<svg style="left:723.2px;top:404.5px;" width="11.6" height="11.6" viewBox="0 0 11.6 11.6" fill="none"><rect x=".5" y=".5" width="10.6" height="10.6" rx="2.6" fill="#4b4b4b" stroke="#636363"/><path d="M3.3 3.3L8.3 8.3M8.3 3.3L3.3 8.3" stroke="#8c8c8c" stroke-width="1.9"/></svg>
<svg style="left:0px;top:0px;" width="1448" height="1018" viewBox="0 0 1448 1018" fill="none"><circle cx="849.8" cy="408.4" r="2.1" fill="#4d4d4d"/><circle cx="849.8" cy="408.4" r=".75" fill="#343434"/><circle cx="849.8" cy="665.6" r="2.1" fill="#4d4d4d"/><circle cx="849.8" cy="665.6" r=".75" fill="#343434"/><circle cx="856" cy="408.4" r="2.1" fill="#4d4d4d"/><circle cx="856" cy="408.4" r=".75" fill="#343434"/><circle cx="856" cy="665.6" r="2.1" fill="#4d4d4d"/><circle cx="856" cy="665.6" r=".75" fill="#343434"/><circle cx="862.2" cy="408.4" r="2.1" fill="#4d4d4d"/><circle cx="862.2" cy="408.4" r=".75" fill="#343434"/><circle cx="862.2" cy="665.6" r="2.1" fill="#4d4d4d"/><circle cx="862.2" cy="665.6" r=".75" fill="#343434"/><circle cx="727.4" cy="530.6" r="2.1" fill="#4d4d4d"/><circle cx="727.4" cy="530.6" r=".75" fill="#343434"/><circle cx="984.6" cy="530.6" r="2.1" fill="#4d4d4d"/><circle cx="984.6" cy="530.6" r=".75" fill="#343434"/><circle cx="727.4" cy="537" r="2.1" fill="#4d4d4d"/><circle cx="727.4" cy="537" r=".75" fill="#343434"/><circle cx="984.6" cy="537" r="2.1" fill="#4d4d4d"/><circle cx="984.6" cy="537" r=".75" fill="#343434"/><circle cx="727.4" cy="543.4" r="2.1" fill="#4d4d4d"/><circle cx="727.4" cy="543.4" r=".75" fill="#343434"/><circle cx="984.6" cy="543.4" r="2.1" fill="#4d4d4d"/><circle cx="984.6" cy="543.4" r=".75" fill="#343434"/><circle cx="978.4" cy="408.4" r="2.1" fill="#4d4d4d"/><circle cx="978.4" cy="408.4" r=".75" fill="#343434"/><circle cx="984.3" cy="408.4" r="2.1" fill="#4d4d4d"/><circle cx="984.3" cy="408.4" r=".75" fill="#343434"/><circle cx="984.3" cy="414.4" r="2.1" fill="#4d4d4d"/><circle cx="984.3" cy="414.4" r=".75" fill="#343434"/><circle cx="978.4" cy="665.6" r="2.1" fill="#4d4d4d"/><circle cx="978.4" cy="665.6" r=".75" fill="#343434"/><circle cx="984.3" cy="665.6" r="2.1" fill="#4d4d4d"/><circle cx="984.3" cy="665.6" r=".75" fill="#343434"/><circle cx="984.3" cy="659.5" r="2.1" fill="#4d4d4d"/><circle cx="984.3" cy="659.5" r=".75" fill="#343434"/><circle cx="727.8" cy="665.6" r="2.1" fill="#4d4d4d"/><circle cx="727.8" cy="665.6" r=".75" fill="#343434"/><circle cx="733.7" cy="665.6" r="2.1" fill="#4d4d4d"/><circle cx="733.7" cy="665.6" r=".75" fill="#343434"/><circle cx="727.8" cy="659.5" r="2.1" fill="#4d4d4d"/><circle cx="727.8" cy="659.5" r=".75" fill="#343434"/></svg>
<div style="left:735.8px;top:416.8px;width:240.2px;height:240.2px;background:#fff;"></div>
<div style="left:735.8px;top:416.8px;width:135.8px;height:109.8px;background:#777777;"></div>
<div class="t" style="left:740.2px;top:420.0px;font-size:14px;color:#e3e3e3;line-height:18px;height:18px;letter-spacing:0.020px;">Participant ID</div>
<div class="t" style="left:740.2px;top:437.0px;font-size:14px;color:#e3e3e3;line-height:18px;height:18px;letter-spacing:0.180px;">Subscribing</div>
<div class="t" style="left:740.2px;top:454.0px;font-size:14px;color:#e3e3e3;line-height:18px;height:18px;letter-spacing:0.048px;">Published</div>
<div class="t" style="left:740.2px;top:471.0px;font-size:14px;color:#e3e3e3;line-height:18px;height:18px;letter-spacing:0.157px;">Video Muted: false</div>
<div class="t" style="left:740.2px;top:488.0px;font-size:14px;color:#e3e3e3;line-height:18px;height:18px;letter-spacing:0.110px;">Audio Muted: false</div>
<div class="t" style="left:740.2px;top:505.0px;font-size:14px;color:#e3e3e3;line-height:18px;height:18px;letter-spacing:0.066px;">Audio Level: -100dB</div>
<div style="left:679px;top:888px;width:390px;height:28px;background:#1d1d1d;"></div>
<div style="left:395.2px;top:916px;width:674px;height:1px;background:#000;"></div>
<div style="left:395.2px;top:917px;width:674px;height:28px;background:#1d1d1d;"></div>
<svg style="left:688px;top:895px;" width="12.85" height="12.7" viewBox="0 0 12.85 12.7" fill="none"><rect x=".65" y=".65" width="11.55" height="11.4" rx="2.3" stroke="#a0a0a0" stroke-width="1.3"/><rect x="2.4" y="2.1" width="2.1" height="8.5" rx=".5" fill="#a0a0a0"/></svg>
<svg style="left:710.8px;top:894px;" width="14.2" height="14.2" viewBox="0 0 14.2 14.2" fill="none"><circle cx="7.1" cy="7.1" r="6.5" stroke="#a0a0a0" stroke-width="1.1"/><circle cx="7.1" cy="3.9" r="1" fill="#a0a0a0"/><path d="M3.9 5.7C6 6.3 8.2 6.3 10.3 5.7M7.1 6.2V8.3M7.1 8.3L5.6 11.3M7.1 8.3L8.6 11.3" stroke="#a0a0a0" stroke-width="1.05" stroke-linecap="round"/></svg>
<svg style="left:736.9px;top:894px;" width="14.3" height="14" viewBox="0 0 14.3 14" fill="none"><circle cx="7.15" cy="7" r="6.35" stroke="#0a6dfd" stroke-width="1.3"/><path d="M7.15 .6A6.4 6.4 0 0 0 7.15 13.4Z" fill="#0a6dfd"/><path d="M7.15 4A3 3 0 0 0 7.15 10Z" fill="#1d1d1d"/><path d="M7.15 4A3 3 0 0 1 7.15 10Z" fill="#0a6dfd"/></svg>
<svg style="left:763.4px;top:893.4px;" width="15" height="15" viewBox="0 0 15 15" fill="none"><rect x="1.25" y="4.45" width="9.3" height="9.6" rx="1.4" stroke="#a0a0a0" stroke-width="1.3"/><path d="M8.4 1.9C11.4 1.5 13.5 3.4 13.7 6" stroke="#a0a0a0" stroke-width="1.1" stroke-linecap="round"/><path d="M10 .3L8.1 1.9L10 3.6" stroke="#a0a0a0" stroke-width="1.1" stroke-linecap="round" stroke-linejoin="round"/></svg>
<svg style="left:788.2px;top:895.4px;" width="11.4" height="12.2" viewBox="0 0 11.4 12.2" fill="none"><rect x=".6" y=".6" width="10.2" height="11" rx="2" stroke="#4b4b4b" stroke-width="1.2"/><path d="M5.7 .6V11.6" stroke="#4b4b4b" stroke-width="1.2"/></svg>
<svg style="left:817px;top:895.5px;" width="7.8" height="12.2" viewBox="0 0 7.8 12.2" fill="none"><rect x=".55" y=".55" width="6.7" height="11.1" rx="1.8" stroke="#a0a0a0" stroke-width="1.1"/><path d="M2.9 1.7H4.9" stroke="#a0a0a0" stroke-width=".9"/></svg>
<div class="t" style="left:839.7px;top:893.0px;font-size:11px;color:#9e9e9e;line-height:16px;height:16px;-webkit-text-stroke:0.3px #9e9e9e;letter-spacing:0.140px;">iPhone 14 Pro</div>
<svg style="left:936.6px;top:893.8px;" width="15.7" height="15" viewBox="0 0 15.7 15" fill="none"><path d="M.6 3.8V1.6C.6 1 1 .6 1.6 .6H3.8M11.9 .6H14.1C14.7 .6 15.1 1 15.1 1.6V3.8M15.1 11.2V13.4C15.1 14 14.7 14.4 14.1 14.4H11.9M3.8 14.4H1.6C1 14.4 .6 14 .6 13.4V11.2" stroke="#a0a0a0" stroke-width="1.1"/><path d="M3.6 7.4A4.3 4.3 0 1 1 7.9 11.7H5.6" stroke="#a0a0a0" stroke-width="1.1" stroke-linecap="round"/><path d="M7.2 9.9L5.3 11.7L7.2 13.4" stroke="#a0a0a0" stroke-width="1.1" stroke-linecap="round" stroke-linejoin="round"/></svg>
<svg style="left:963px;top:894px;" width="15" height="14" viewBox="0 0 15 14" fill="none"><path d="M.7 0V14" stroke="#a0a0a0" stroke-width="1.3"/><rect x="3.4" y="1.6" width="8" height="4" stroke="#a0a0a0" stroke-width="1.2"/><rect x="3.4" y="8.4" width="11" height="4" stroke="#a0a0a0" stroke-width="1.2"/></svg>
<svg style="left:988.4px;top:893.4px;" width="15.8" height="15.2" viewBox="0 0 15.8 15.2" fill="none"><rect x="4.4" y="4.2" width="7" height="6.8" stroke="#a0a0a0" stroke-width="1.2"/><path d="M.6 5.6V9.6M15.2 5.6V9.6M.6 7.6H3M12.8 7.6H15.2M5.9 .6H9.9M5.9 14.6H9.9M7.9 .6V2.8M7.9 12.4V14.6" stroke="#a0a0a0" stroke-width="1.1"/></svg>
<svg style="left:1014.5px;top:896px;" width="15.8" height="10.8" viewBox="0 0 15.8 10.8" fill="none"><path d="M.6 2.8V8.4M15.2 2.8V8.4M.6 5.6H3M12.8 5.6H15.2" stroke="#a0a0a0" stroke-width="1.1"/><path d="M7.9 .8L12 9.6H3.8Z" stroke="#a0a0a0" stroke-width="1.1" stroke-linejoin="round"/><circle cx="7.9" cy="6.6" r="1.1" fill="#a0a0a0"/></svg>
<svg style="left:1042.7px;top:893.8px;" width="15.4" height="14.4" viewBox="0 0 15.4 14.4" fill="none"><path d="M5 3.6H1.6C1 3.6 .6 4 .6 4.6V12.8C.6 13.4 1 13.8 1.6 13.8H13.8C14.4 13.8 14.8 13.4 14.8 12.8V4.6C14.8 4 14.4 3.6 13.8 3.6H10.4" stroke="#a0a0a0" stroke-width="1.2"/><path d="M7.7 0V9.6M4.6 6.8L7.7 9.8L10.8 6.8" stroke="#a0a0a0" stroke-width="1.2" stroke-linecap="round" stroke-linejoin="round"/></svg>
<svg style="left:406.8px;top:925.8px;" width="14.6" height="9.2" viewBox="0 0 14.6 9.2" fill="none"><path d="M1.8 .6H10.2C10.6 .6 11 .8 11.3 1.1L13.8 4C14.1 4.35 14.1 4.85 13.8 5.2L11.3 8.1C11 8.4 10.6 8.6 10.2 8.6H1.8C1.1 8.6 .6 8.1 .6 7.4V1.8C.6 1.1 1.1 .6 1.8 .6Z" stroke="#c0c0c0" stroke-width="1.1"/></svg>
<svg style="left:1044px;top:923.6px;" width="13.4" height="13.4" viewBox="0 0 13.4 13.4" fill="none"><rect x=".6" y=".6" width="12.2" height="12.2" rx="2.4" stroke="#b4b4b4" stroke-width="1.2"/><rect x="2.6" y="7.6" width="8.2" height="3.2" rx=".6" fill="#b4b4b4"/></svg>
<!-- insp -->
<div style="left:1069px;top:37px;width:1.2px;height:908px;background:#000;"></div>
<div style="left:1070.2px;top:37px;width:323px;height:908px;background:#242424;"></div>
<div style="left:1070.2px;top:76px;width:323px;height:1px;background:#3a3a3a;"></div>
<div style="left:1070.2px;top:104.4px;width:323px;height:1px;background:#3a3a3a;"></div>
<svg style="left:1357px;top:49px;" width="19" height="16" viewBox="0 0 19 16" fill="none"><rect x=".7" y=".7" width="17.6" height="14.6" rx="2.5" stroke="#9b9b9b" stroke-width="1.3"/><path d="M12.4 .7V15.3" stroke="#9b9b9b" stroke-width="1.3"/><path d="M14.2 4.2H16.6M14.2 6.5H16.6M14.2 8.8H16.6" stroke="#9b9b9b" stroke-width="1"/></svg>
<svg style="left:1136.9px;top:84.4px;" width="10.4" height="12.4" viewBox="0 0 10.4 12.4" fill="none"><path d="M1.8 .6H6.2L9.8 4.2V10.6C9.8 11.3 9.3 11.8 8.6 11.8H1.8C1.1 11.8 .6 11.3 .6 10.6V1.8C.6 1.1 1.1 .6 1.8 .6Z" stroke="#9b9b9b" stroke-width="1.2" stroke-linejoin="round"/><path d="M6 .8V4.4H9.6" stroke="#9b9b9b" stroke-width="1.1"/></svg>
<svg style="left:1164.7px;top:84px;" width="13.6" height="13.6" viewBox="0 0 13.6 13.6" fill="none"><circle cx="6.8" cy="6.8" r="6.1" stroke="#9b9b9b" stroke-width="1.2"/><path d="M6.8 3.2V7.2H3.8" stroke="#9b9b9b" stroke-width="1.2"/></svg>
<svg style="left:1194.6px;top:84px;" width="13.6" height="13.6" viewBox="0 0 13.6 13.6" fill="none"><circle cx="6.8" cy="6.8" r="6.1" stroke="#9b9b9b" stroke-width="1.2"/><path d="M4.9 5.4C4.9 3.2 8.7 3.2 8.7 5.4C8.7 6.8 6.8 6.8 6.8 8.2" stroke="#9b9b9b" stroke-width="1.2" stroke-linecap="round"/><circle cx="6.8" cy="10.2" r=".8" fill="#9b9b9b"/></svg>
<svg style="left:1224.9px;top:85.4px;" width="13.6" height="10.8" viewBox="0 0 13.6 10.8" fill="none"><rect x=".6" y=".6" width="12.4" height="9.6" rx="1.2" stroke="#9b9b9b" stroke-width="1.2"/><rect x="2.7" y="2.7" width="4" height="3.4" stroke="#9b9b9b" stroke-width="1"/><path d="M8.4 3H11M8.4 5.4H11M2.4 8H11" stroke="#9b9b9b" stroke-width="1"/></svg>
<svg style="left:1254.6px;top:84.6px;" width="13.4" height="12.4" viewBox="0 0 13.4 12.4" fill="none"><path d="M0 1.6H13.4M0 6.2H13.4M0 10.8H13.4" stroke="#9b9b9b" stroke-width="1.1"/><circle cx="9.6" cy="1.6" r="1.3" fill="#242424" stroke="#9b9b9b"/><circle cx="3.6" cy="6.2" r="1.3" fill="#242424" stroke="#9b9b9b"/><circle cx="9.6" cy="10.8" r="1.3" fill="#242424" stroke="#9b9b9b"/></svg>
<svg style="left:1284.8px;top:84.2px;" width="12.8" height="12.8" viewBox="0 0 12.8 12.8" fill="none"><path d="M.7 .9V12.1H12Z" stroke="#9b9b9b" stroke-width="1.3" stroke-linejoin="round"/><path d="M3.6 6.6V9.4H6.4Z" stroke="#9b9b9b" stroke-width="1" stroke-linejoin="round"/></svg>
<svg style="left:1315px;top:84px;" width="13.6" height="13.6" viewBox="0 0 13.6 13.6" fill="none"><path d="M11.6 3.1A5.9 5.9 0 1 0 11.6 10.5" stroke="#0a6dfd" stroke-width="1.5" stroke-linecap="round"/><circle cx="6.9" cy="6.8" r="2.5" fill="#0a6dfd"/><path d="M6.9 6.8H13.2" stroke="#0a6dfd" stroke-width="1.4" stroke-linecap="round"/></svg>
<div class="t" style="left:1183.2px;top:514.2px;font-size:17px;color:#a2a2a2;line-height:22px;height:22px;-webkit-text-stroke:0.4px #a2a2a2;letter-spacing:-0.149px;">No Selection</div></div><div style="left:0;top:0;width:100%;height:100%;border-radius:10px;box-shadow:inset 0 0 0 1px rgba(255,255,255,.19)"></div></div>
</body></html>
